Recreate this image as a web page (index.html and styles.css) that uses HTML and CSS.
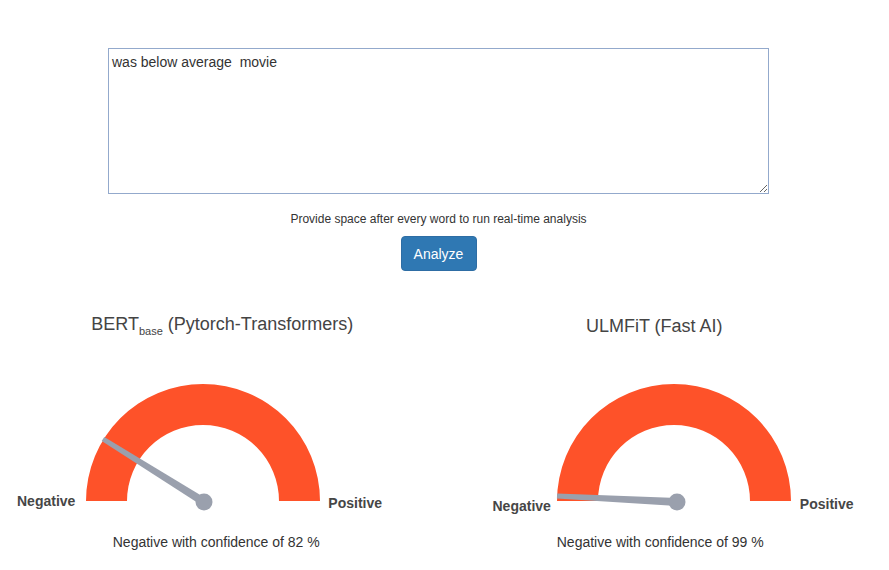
FILE: index.html
```html
<!DOCTYPE html>
<html lang="en">
<head>
<meta charset="utf-8">
<title>Sentiment Analysis</title>
<link rel="stylesheet" href="styles.css">
</head>
<body>
<section class="top">
  <textarea class="input">was below average  movie</textarea>
  <p class="hint">Provide space after every word to run real-time analysis</p>
  <button class="btn">Analyze</button>
</section>
<section class="gauges">
  <div class="col col-bert">
    <h3 class="title">BERT<sub>base</sub> (Pytorch-Transformers)</h3>
    <div class="gauge-row">
      <span class="label label-neg">Negative</span>
      <svg class="gauge" width="236" height="127" viewBox="0 0 236 127">
        <path d="M 1 117 A 117 117 0 0 1 235 117 L 194 117 A 76 76 0 0 0 42 117 Z" fill="#fe5229"/>
        <polygon points="121.1,114.6 116.9,121.4 16.7,57.1 19.3,52.9" fill="#9aa0ad"/>
        <circle cx="119" cy="118" r="8.5" fill="#9aa0ad"/>
      </svg>
      <span class="label label-pos">Positive</span>
    </div>
    <p class="conf">Negative with confidence of 82 %</p>
  </div>
  <div class="col col-ulm">
    <h3 class="title">ULMFiT (Fast AI)</h3>
    <div class="gauge-row">
      <span class="label label-neg">Negative</span>
      <svg class="gauge" width="236" height="127" viewBox="0 0 236 127">
        <path d="M 1 117 A 117 117 0 0 1 235 117 L 194 117 A 76 76 0 0 0 42 117 Z" fill="#fe5229"/>
        <polygon points="121.2,114 120.8,122 0.9,114.5 1.1,109.5" fill="#9aa0ad"/>
        <circle cx="121" cy="118" r="8.5" fill="#9aa0ad"/>
      </svg>
      <span class="label label-pos">Positive</span>
    </div>
    <p class="conf">Negative with confidence of 99 %</p>
  </div>
</section>
</body>
</html>
```

FILE: styles.css
```css
html, body {
  margin: 0;
  padding: 0;
  background: #ffffff;
  font-family: "Liberation Sans", Arial, sans-serif;
  color: #333333;
}

.top {
  display: flex;
  flex-direction: column;
  align-items: center;
  padding: 48px 12px 0 0;
}

.input {
  box-sizing: border-box;
  width: 661px;
  height: 146px;
  margin: 0;
  padding: 5px 3px 4px;
  border: 1px solid #93a9cc;
  border-radius: 0;
  font-family: "Liberation Sans", Arial, sans-serif;
  font-size: 14px;
  line-height: 17px;
  color: #333333;
  outline: none;
  resize: both;
}

.hint {
  margin: 18px 0 0;
  font-size: 12px;
  line-height: 14px;
  color: #333333;
}

.btn {
  margin-top: 10px;
  width: 76px;
  height: 35px;
  padding: 0;
  border: 1px solid #2e6da4;
  border-radius: 4px;
  background: #2f78b3;
  color: #ffffff;
  font-family: "Liberation Sans", Arial, sans-serif;
  font-size: 14px;
}

.gauges {
  display: grid;
  grid-template-columns: 1fr 1fr;
  margin-top: 43px;
}

.col {
  display: flex;
  flex-direction: column;
}

.title {
  margin: 0;
  font-size: 18px;
  line-height: 21px;
  font-weight: normal;
  color: #444444;
  text-align: center;
}

.title sub {
  font-size: 11px;
  line-height: 0;
  color: #444444;
}

.col-ulm .title {
  padding-right: 25px;
  margin-top: 2px;
  margin-bottom: -2px;
}

.gauge-row {
  display: flex;
  align-items: flex-end;
  margin-top: 49px;
}

.col-bert .gauge-row {
  padding-left: 17px;
}

.col-ulm .gauge-row {
  padding-left: 48px;
}

.gauge {
  display: block;
  flex: none;
}

.label {
  font-size: 14px;
  line-height: 16px;
  font-weight: bold;
  color: #464646;
}

.col-bert .label-neg {
  margin-right: 10px;
  margin-bottom: 2px;
}

.col-bert .label-pos {
  margin-left: 7px;
  margin-bottom: 0;
}

.col-ulm .label-neg {
  margin-right: 5px;
  margin-bottom: -3px;
}

.col-ulm .label-pos {
  margin-left: 8px;
  margin-bottom: -1px;
}

.conf {
  margin: 23px 0 0;
  font-size: 14px;
  line-height: 16px;
  color: #333333;
  text-align: center;
}

.col-bert .conf {
  padding-right: 12px;
}

.col-ulm .conf {
  padding-right: 13px;
}
```
